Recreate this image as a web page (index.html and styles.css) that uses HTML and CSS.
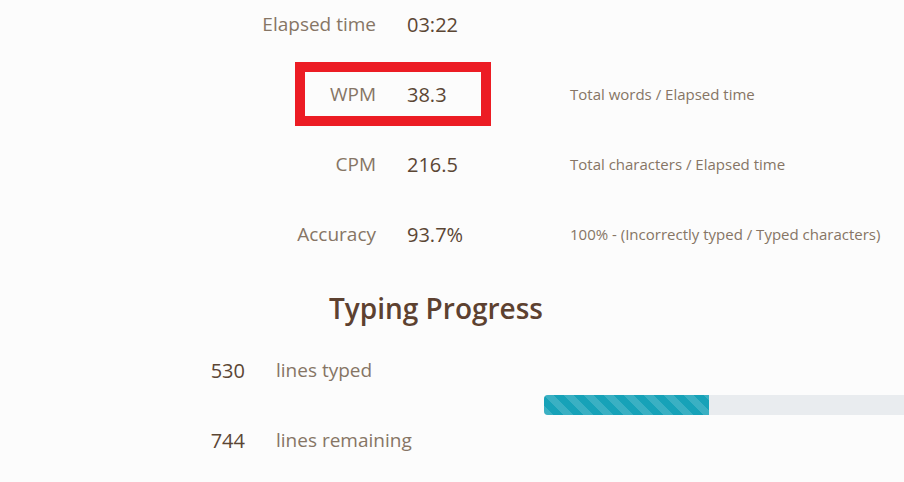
FILE: index.html
```html
<!DOCTYPE html>
<html>
<head>
<meta charset="utf-8">
<link rel="stylesheet" href="styles.css">
</head>
<body>
<div class="page">
  <div class="stats">
    <div class="label">Elapsed time</div>
    <div class="value">03:22</div>
    <div class="desc"></div>

    <div class="label">WPM</div>
    <div class="value">38.3</div>
    <div class="desc">Total words / Elapsed time</div>

    <div class="label">CPM</div>
    <div class="value">216.5</div>
    <div class="desc">Total characters / Elapsed time</div>

    <div class="label">Accuracy</div>
    <div class="value">93.7%</div>
    <div class="desc">100% - (Incorrectly typed / Typed characters)</div>
  </div>

  <h2 class="heading">Typing Progress</h2>

  <div class="progress-section">
    <div class="counts">
      <div class="num">530</div>
      <div class="text">lines typed</div>
      <div class="num">744</div>
      <div class="text">lines remaining</div>
    </div>
    <div class="bar-wrap">
      <div class="bar">
        <div class="fill" style="width: 165px"></div>
      </div>
    </div>
  </div>

  <div class="highlight"></div>
</div>
</body>
</html>
```
FILE: styles.css
```css
html, body {
  margin: 0;
  padding: 0;
  background: #fcfcfc;
  overflow: hidden;
}
body {
  font-family: "Open Sans", "Noto Sans", sans-serif;
  width: 904px;
  height: 482px;
}
.page {
  position: relative;
  display: flow-root;
  width: 904px;
  height: 482px;
}
.stats {
  display: grid;
  grid-template-columns: 376px 132px 1fr;
  column-gap: 31px;
  grid-auto-rows: 70px;
  align-items: center;
  margin-top: -11px;
}
.label {
  text-align: right;
  font-size: 19px;
  color: #867565;
  white-space: nowrap;
}
.value {
  font-size: 20px;
  color: #5b4634;
  white-space: nowrap;
}
.desc {
  font-size: 15px;
  color: #867565;
  white-space: nowrap;
}
.heading {
  margin: 0;
  padding-top: 19px;
  height: 59px;
  box-sizing: border-box;
  text-align: center;
  width: 872px;
  font-size: 28px;
  font-weight: 600;
  color: #5d4130;
  line-height: 40px;
}
.progress-section {
  display: flex;
  align-items: center;
  margin-top: 7px;
}
.counts {
  flex: 0 0 544px;
  display: grid;
  grid-template-columns: 245px auto;
  column-gap: 31px;
  grid-auto-rows: 70px;
  align-items: center;
}
.num {
  text-align: right;
  font-size: 20px;
  color: #5b4634;
}
.text {
  font-size: 19px;
  color: #867565;
}
.bar-wrap {
  flex: 1;
  min-width: 0;
}
.bar {
  height: 20px;
  width: 380px;
  background: #e9ecef;
  border-radius: 4px 0 0 4px;
  overflow: hidden;
}
.fill {
  height: 100%;
  background-color: #17a2b8;
  background-image: linear-gradient(45deg,
    rgba(255,255,255,.15) 25%, transparent 25%,
    transparent 50%, rgba(255,255,255,.15) 50%,
    rgba(255,255,255,.15) 75%, transparent 75%, transparent);
  background-size: 20px 20px;
}
.highlight {
  position: absolute;
  left: 295px;
  top: 62px;
  width: 196px;
  height: 64px;
  box-sizing: border-box;
  border: 10px solid #ec1c24;
}
```
